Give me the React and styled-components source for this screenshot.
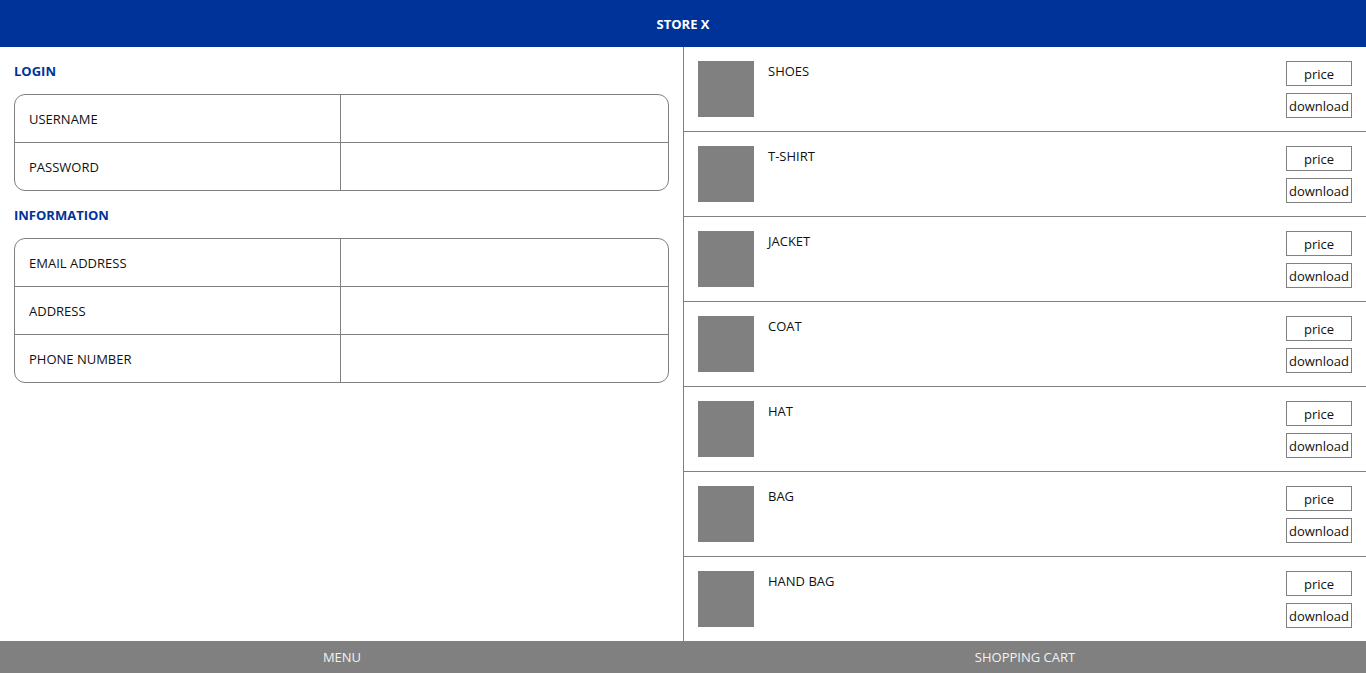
import React from 'react';
import styled, { createGlobalStyle } from 'styled-components';

const GlobalStyle = createGlobalStyle`
  * { box-sizing: border-box; }
  html, body { margin: 0; padding: 0; }
  body {
    font-family: "Open Sans", "Noto Sans", sans-serif;
    font-size: 13px;
    color: #111;
    background: #fff;
  }
`;

const Page = styled.div`
  width: 1366px;
  height: 673px;
  display: flex;
  flex-direction: column;
  overflow: hidden;
`;

const Header = styled.header`
  height: 47px;
  background: #003399;
  color: #fff;
  font-weight: 700;
  font-size: 13px;
  display: flex;
  justify-content: center;
  align-items: center;
`;

const Main = styled.main`
  flex: 1;
  display: flex;
  min-height: 0;
`;

const LeftPanel = styled.section`
  width: 684px;
  border-right: 1px solid #808080;
  padding: 0 14px;
`;

const SectionTitle = styled.h2`
  margin: 0;
  height: 47px;
  display: flex;
  align-items: center;
  font-size: 13px;
  font-weight: 700;
  color: #003399;
`;

const FormTable = styled.div`
  border: 1px solid #808080;
  border-radius: 11px;
  overflow: hidden;
`;

const FormRow = styled.div`
  box-sizing: content-box;
  display: grid;
  grid-template-columns: 326px 1fr;
  height: 47px;
  & + & {
    border-top: 1px solid #808080;
  }
`;

const FieldLabel = styled.div`
  display: flex;
  align-items: center;
  padding-left: 14px;
  border-right: 1px solid #808080;
`;

const FieldValue = styled.div``;

const RightPanel = styled.section`
  flex: 1;
  display: flex;
  flex-direction: column;
`;

const Item = styled.div`
  height: 85px;
  display: flex;
  align-items: flex-start;
  padding: 14px;
  border-bottom: 1px solid #808080;
  &:last-child {
    border-bottom: none;
    height: 84px;
  }
`;

const Thumb = styled.div`
  width: 56px;
  height: 56px;
  background: #808080;
  flex-shrink: 0;
`;

const ItemName = styled.div`
  flex: 1;
  margin-left: 14px;
  line-height: 20px;
`;

const Actions = styled.div`
  display: flex;
  flex-direction: column;
  gap: 7px;
`;

const SmallButton = styled.div`
  width: 66px;
  height: 25px;
  border: 1px solid #808080;
  display: flex;
  align-items: center;
  justify-content: center;
  font-size: 13px;
`;

const Footer = styled.footer`
  height: 32px;
  background: #808080;
  display: flex;
`;

const FooterTab = styled.div`
  flex: ${(p) => (p.$left ? '0 0 684px' : '1')};
  display: flex;
  align-items: center;
  justify-content: center;
  color: #f2f2f2;
  font-size: 13px;
`;

const items = ['SHOES', 'T-SHIRT', 'JACKET', 'COAT', 'HAT', 'BAG', 'HAND BAG'];

const Form = ({ fields }) => (
  <FormTable>
    {fields.map((f) => (
      <FormRow key={f}>
        <FieldLabel>{f}</FieldLabel>
        <FieldValue />
      </FormRow>
    ))}
  </FormTable>
);

export default function App() {
  return (
    <Page>
      <GlobalStyle />
      <Header>STORE X</Header>
      <Main>
        <LeftPanel>
          <SectionTitle>LOGIN</SectionTitle>
          <Form fields={['USERNAME', 'PASSWORD']} />
          <SectionTitle>INFORMATION</SectionTitle>
          <Form fields={['EMAIL ADDRESS', 'ADDRESS', 'PHONE NUMBER']} />
        </LeftPanel>
        <RightPanel>
          {items.map((name) => (
            <Item key={name}>
              <Thumb />
              <ItemName>{name}</ItemName>
              <Actions>
                <SmallButton>price</SmallButton>
                <SmallButton>download</SmallButton>
              </Actions>
            </Item>
          ))}
        </RightPanel>
      </Main>
      <Footer>
        <FooterTab $left>MENU</FooterTab>
        <FooterTab>SHOPPING CART</FooterTab>
      </Footer>
    </Page>
  );
}
